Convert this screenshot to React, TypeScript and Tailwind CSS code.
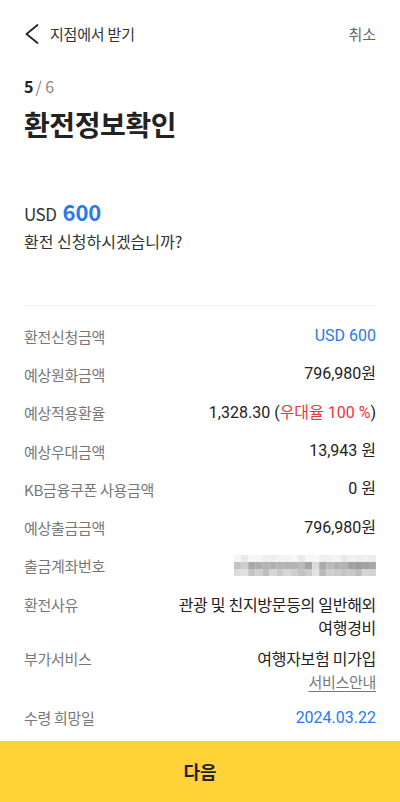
const rows1 = [
  { label: "환전신청금액", value: <span className="text-[#2979f2]">USD 600</span> },
  { label: "예상원화금액", value: <span>796,980원</span> },
  {
    label: "예상적용환율",
    value: (
      <span>
        1,328.30 (<span className="text-[#f2343c]">우대율 100 %</span>)
      </span>
    ),
  },
  { label: "예상우대금액", value: <span>13,943 원</span> },
  { label: "KB금융쿠폰 사용금액", value: <span>0 원</span> },
  { label: "예상출금금액", value: <span>796,980원</span> },
];

// pixelated account number
const blur = [
  [245, 232, 247, 244, 238, 239, 242, 244, 247, 233, 246, 247, 239, 241, 244, 232, 240, 238, 241, 236],
  [196, 206, 168, 172, 178, 175, 181, 178, 180, 186, 163, 218, 170, 186, 176, 178, 160, 158, 162, 168],
  [220, 224, 196, 208, 190, 214, 202, 214, 206, 194, 204, 226, 186, 206, 202, 196, 200, 190, 214, 210],
];

const Blurred = () => (
  <svg width="142" height="21" viewBox="0 0 142 21">
    {blur.map((r, y) =>
      r.map((g, x) => (
        <rect key={`${x}-${y}`} x={x * 7.1} y={y * 7} width="7.2" height="7" fill={`rgb(${g},${g},${g})`} />
      ))
    )}
  </svg>
);

const labelCls = "text-[15px] leading-[23px] text-[#777] font-['Noto_Sans_CJK_KR',sans-serif] tracking-[-0.3px]";

const App = () => {
  return (
    <div className="h-[802px] w-full bg-white flex flex-col overflow-hidden font-['Roboto','Noto_Sans_CJK_KR',sans-serif] text-[#222]">
      <div className="flex-1 overflow-hidden px-6">
        <div className="flex items-center justify-between pt-[22px] h-[46px]">
          <div className="flex items-center gap-[11px] ml-[1px]">
            <svg width="14" height="20" viewBox="0 0 14 20" fill="none">
              <polyline points="12.5,1 1.5,10 12.5,19" stroke="#222" strokeWidth="1.7" strokeLinecap="round" strokeLinejoin="round" />
            </svg>
            <span className="text-[15px] font-['Noto_Sans_CJK_KR',sans-serif] text-[#333] tracking-[-0.2px]">
              지점에서 받기
            </span>
          </div>
          <span className="text-[15px] font-['Noto_Sans_CJK_KR',sans-serif] text-[#666]">취소</span>
        </div>

        <div className="mt-[30px] text-[16px] leading-[20px] font-['Noto_Sans_CJK_KR',sans-serif]">
          <span className="font-bold text-[#222]">5</span>
          <span className="text-[#888] ml-[2px]">/ 6</span>
        </div>
        <h1 className="mt-[9px] text-[28px] leading-[38px] font-bold font-['Noto_Sans_CJK_KR',sans-serif] tracking-[-0.4px] text-[#222]">
          환전정보확인
        </h1>

        <div className="mt-[52px] flex items-baseline gap-[6px] font-['Noto_Sans_CJK_KR',sans-serif]">
          <span className="text-[17px] text-[#333] tracking-[-0.5px]">USD</span>
          <span className="text-[22px] font-semibold text-[#2979f2]">600</span>
        </div>
        <p className="mt-[1px] text-[16px] leading-[24px] font-['Noto_Sans_CJK_KR',sans-serif] text-[#333]">
          환전 신청하시겠습니까?
        </p>

        <div className="mt-[52px] border-t border-[#eeeeee]" />

        <div className="mt-[11px] flex flex-col">
          {rows1.map((r) => (
            <div key={r.label} className="flex justify-between items-center h-[38.3px]">
              <span className={labelCls}>{r.label}</span>
              <span className="text-[16px] text-[#222]">{r.value}</span>
            </div>
          ))}
          <div className="flex justify-between items-center h-[38.3px]">
            <span className={labelCls}>출금계좌번호</span>
            <Blurred />
          </div>
          <div className="flex justify-between items-start h-[54px] pt-[7.6px]">
            <span className={labelCls}>환전사유</span>
            <span className="text-[16px] leading-[23px] text-right text-[#222] font-['Noto_Sans_CJK_KR',sans-serif] tracking-[-0.3px]">
              관광 및 친지방문등의 일반해외
              <br />
              여행경비
            </span>
          </div>
          <div className="flex justify-between items-start h-[59.3px] pt-[7.6px]">
            <span className={labelCls}>부가서비스</span>
            <div className="flex flex-col items-end font-['Noto_Sans_CJK_KR',sans-serif] tracking-[-0.3px]">
              <span className="text-[16px] leading-[23px] text-[#222]">여행자보험 미가입</span>
              <span className="text-[15px] leading-[24px] text-[#777] underline underline-offset-[3px]">서비스안내</span>
            </div>
          </div>
          <div className="flex justify-between items-center h-[38.3px]">
            <span className={labelCls}>수령 희망일</span>
            <span className="text-[16px] text-[#2979f2]">2024.03.22</span>
          </div>
        </div>
      </div>

      <button className="h-[61px] w-full shrink-0 bg-[#ffd338] text-[18px] font-bold text-[#222] font-['Noto_Sans_CJK_KR',sans-serif]">
        다음
      </button>
    </div>
  );
};

export default App;
